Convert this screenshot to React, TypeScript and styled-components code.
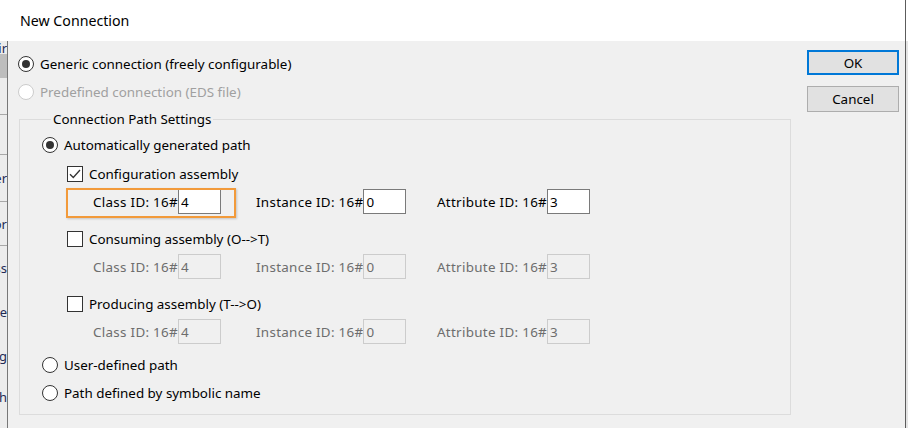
import { createGlobalStyle, css, styled } from "styled-components";

const GlobalStyle = createGlobalStyle`
  html, body {
    margin: 0;
    padding: 0;
    background: #f0f0f0;
  }
  body {
    font-family: "Noto Sans", "Open Sans", sans-serif;
    font-size: 13.4px;
    color: #000;
  }
  * {
    box-sizing: border-box;
  }
`;

const Screen = styled.div`
  display: flex;
  width: 908px;
  height: 428px;
  overflow: hidden;
`;

const Dialog = styled.div`
  width: 906px;
  display: flex;
  flex-direction: column;
  border-right: 1px solid #5c5c5c;
`;

const Edge = styled.div`
  flex: 1;
  background: linear-gradient(#ffffff 0 41px, #e4e4e4 41px);
`;

const TitleBar = styled.div`
  height: 41px;
  flex-shrink: 0;
  background: #ffffff;
  display: flex;
  align-items: center;
  padding: 0 0 1px 20px;
  font-size: 14.2px;
  color: #000;
`;

const Body = styled.div`
  flex: 1;
  display: flex;
  min-height: 0;
`;

const Behind = styled.div`
  width: 8px;
  flex-shrink: 0;
  border-right: 1px solid #777;
  background: #ececec;
  display: flex;
  flex-direction: column;
  overflow: hidden;
`;

const BehindRow = styled.div<{ $h: number; $sep?: boolean; $shade?: boolean }>`
  height: ${({ $h }) => $h}px;
  flex-shrink: 0;
  display: flex;
  justify-content: flex-end;
  align-items: center;
  white-space: nowrap;
  color: #1e2a55;
  font-size: 13px;
  background: ${({ $shade }) => ($shade ? "#bdbdbd" : "transparent")};
  border-bottom: ${({ $sep }) => ($sep ? "1px solid #a8a8a8" : "none")};
`;

const Content = styled.div`
  flex: 1;
  display: flex;
  justify-content: space-between;
  padding: 9px 6px 0 0;
  background: #f0f0f0;
`;

const MainColumn = styled.div`
  width: 783px;
  display: flex;
  flex-direction: column;
`;

const TopOptions = styled.div`
  display: flex;
  flex-direction: column;
  padding-left: 10px;
`;

const OptionRow = styled.label<{ $disabled?: boolean }>`
  height: 28px;
  display: flex;
  align-items: center;
  gap: 6px;
  color: ${({ $disabled }) => ($disabled ? "#a0a0a0" : "#000")};
`;

const RadioCircle = styled.span<{ $checked?: boolean; $disabled?: boolean }>`
  width: 16px;
  height: 16px;
  flex-shrink: 0;
  border-radius: 50%;
  border: 1px solid ${({ $disabled }) => ($disabled ? "#cccccc" : "#333333")};
  background: #ffffff;
  display: flex;
  align-items: center;
  justify-content: center;

  &::after {
    content: "";
    width: 8px;
    height: 8px;
    border-radius: 50%;
    background: #333333;
    display: ${({ $checked }) => ($checked ? "block" : "none")};
  }
`;

const Group = styled.fieldset`
  margin: 5px 0 0 11px;
  width: 772px;
  height: 304px;
  padding: 4px 0 0 22px;
  border: 1px solid #dcdcdc;
  display: flex;
  flex-direction: column;
`;

const GroupTitle = styled.legend`
  margin-left: 9px;
  padding: 0 2px;
  line-height: 16px;
`;

const Assembly = styled.div<{ $first?: boolean }>`
  display: flex;
  flex-direction: column;
  padding-left: 25px;
  margin-top: ${({ $first }) => ($first ? 4 : 14)}px;
`;

const CheckRow = styled.label`
  height: 22px;
  display: flex;
  align-items: center;
  gap: 6px;
`;

const CheckBox = styled.span`
  width: 16px;
  height: 16px;
  flex-shrink: 0;
  border: 1px solid #333333;
  background: #ffffff;
  display: flex;
  align-items: center;
  justify-content: center;
`;

const FieldsRow = styled.div`
  margin-top: 4px;
  padding-left: 26px;
  display: grid;
  grid-template-columns: 163px 181px auto;
  align-items: center;
`;

const Field = styled.div<{ $disabled?: boolean }>`
  position: relative;
  justify-self: start;
  display: inline-flex;
  align-items: center;
  height: 25px;
  color: ${({ $disabled }) => ($disabled ? "#6d6d6d" : "#000")};
`;

const FieldLabel = styled.span`
  letter-spacing: 0.3px;
`;

const IdInput = styled.input<{ $disabled?: boolean }>`
  width: 43px;
  height: 25px;
  margin: 0;
  padding: 0 2px;
  font: inherit;
  outline: none;
  ${({ $disabled }) =>
    $disabled
      ? css`
          border: 1px solid #cccccc;
          background: #f0f0f0;
          color: #6d6d6d;
        `
      : css`
          border: 1px solid #7a7a7a;
          background: #ffffff;
          color: #000;
        `}
`;

const Highlight = styled.span`
  position: absolute;
  left: -27px;
  right: -15px;
  top: -1px;
  bottom: -4px;
  border: 2px solid #f29a3a;
  box-shadow: 1px 1px 2px rgba(0, 0, 0, 0.18);
  pointer-events: none;
`;

const PathOptions = styled.div`
  margin-top: 7px;
  display: flex;
  flex-direction: column;
`;

const ButtonColumn = styled.div`
  width: 92px;
  display: flex;
  flex-direction: column;
  gap: 11px;
`;

const DialogButton = styled.button<{ $default?: boolean }>`
  width: 92px;
  height: ${({ $default }) => ($default ? 25 : 26)}px;
  padding: 0;
  background: #e1e1e1;
  font: inherit;
  color: #000;
  border: ${({ $default }) =>
    $default ? "2px solid #0078d7" : "1px solid #adadad"};
`;

const Radio = ({
  label,
  checked,
  disabled,
}: {
  label: string;
  checked?: boolean;
  disabled?: boolean;
}) => (
  <OptionRow $disabled={disabled}>
    <RadioCircle $checked={checked} $disabled={disabled} />
    {label}
  </OptionRow>
);

const Check = ({ checked }: { checked?: boolean }) => (
  <CheckBox>
    {checked && (
      <svg width="14" height="14" viewBox="0 0 14 14">
        <path
          d="M2 7.2 L5.3 10.5 L12 3"
          fill="none"
          stroke="#333"
          strokeWidth="1.3"
        />
      </svg>
    )}
  </CheckBox>
);

const idFields = [
  { label: "Class ID: 16#", value: "4" },
  { label: "Instance ID: 16#", value: "0" },
  { label: "Attribute ID: 16#", value: "3" },
];

const assemblies = [
  { label: "Configuration assembly", enabled: true },
  { label: "Consuming assembly (O-->T)", enabled: false },
  { label: "Producing assembly (T-->O)", enabled: false },
];

// the window lying behind the dialog, only its right edge shows
const behindRows = [
  { h: 13, t: "Domir" },
  { h: 24, t: "", shade: true },
  { h: 37, t: "", sep: true },
  { h: 40, t: "", sep: true },
  { h: 47, t: "Adapter", sep: true },
  { h: 44, t: "Monitor", sep: true },
  { h: 44, t: "Access" },
  { h: 44, t: "License" },
  { h: 43, t: "Catalog" },
  { h: 40, t: "Path" },
];

export default function App() {
  return (
    <>
      <GlobalStyle />
      <Screen>
        <Dialog>
          <TitleBar>New Connection</TitleBar>
          <Body>
            <Behind>
              {behindRows.map((r, i) => (
                <BehindRow key={i} $h={r.h} $sep={r.sep} $shade={r.shade}>
                  {r.t}
                </BehindRow>
              ))}
            </Behind>
            <Content>
              <MainColumn>
                <TopOptions>
                  <Radio label="Generic connection (freely configurable)" checked />
                  <Radio label="Predefined connection (EDS file)" disabled />
                </TopOptions>
                <Group>
                  <GroupTitle>Connection Path Settings</GroupTitle>
                  <Radio label="Automatically generated path" checked />
                  {assemblies.map((a, ai) => (
                    <Assembly key={a.label} $first={ai === 0}>
                      <CheckRow>
                        <Check checked={a.enabled} />
                        {a.label}
                      </CheckRow>
                      <FieldsRow>
                        {idFields.map((f, fi) => (
                          <Field key={f.label} $disabled={!a.enabled}>
                            <FieldLabel>{f.label}</FieldLabel>
                            <IdInput
                              defaultValue={f.value}
                              disabled={!a.enabled}
                              $disabled={!a.enabled}
                            />
                            {a.enabled && fi === 0 && <Highlight />}
                          </Field>
                        ))}
                      </FieldsRow>
                    </Assembly>
                  ))}
                  <PathOptions>
                    <Radio label="User-defined path" />
                    <Radio label="Path defined by symbolic name" />
                  </PathOptions>
                </Group>
              </MainColumn>
              <ButtonColumn>
                <DialogButton $default>OK</DialogButton>
                <DialogButton>Cancel</DialogButton>
              </ButtonColumn>
            </Content>
          </Body>
        </Dialog>
        <Edge />
      </Screen>
    </>
  );
}
